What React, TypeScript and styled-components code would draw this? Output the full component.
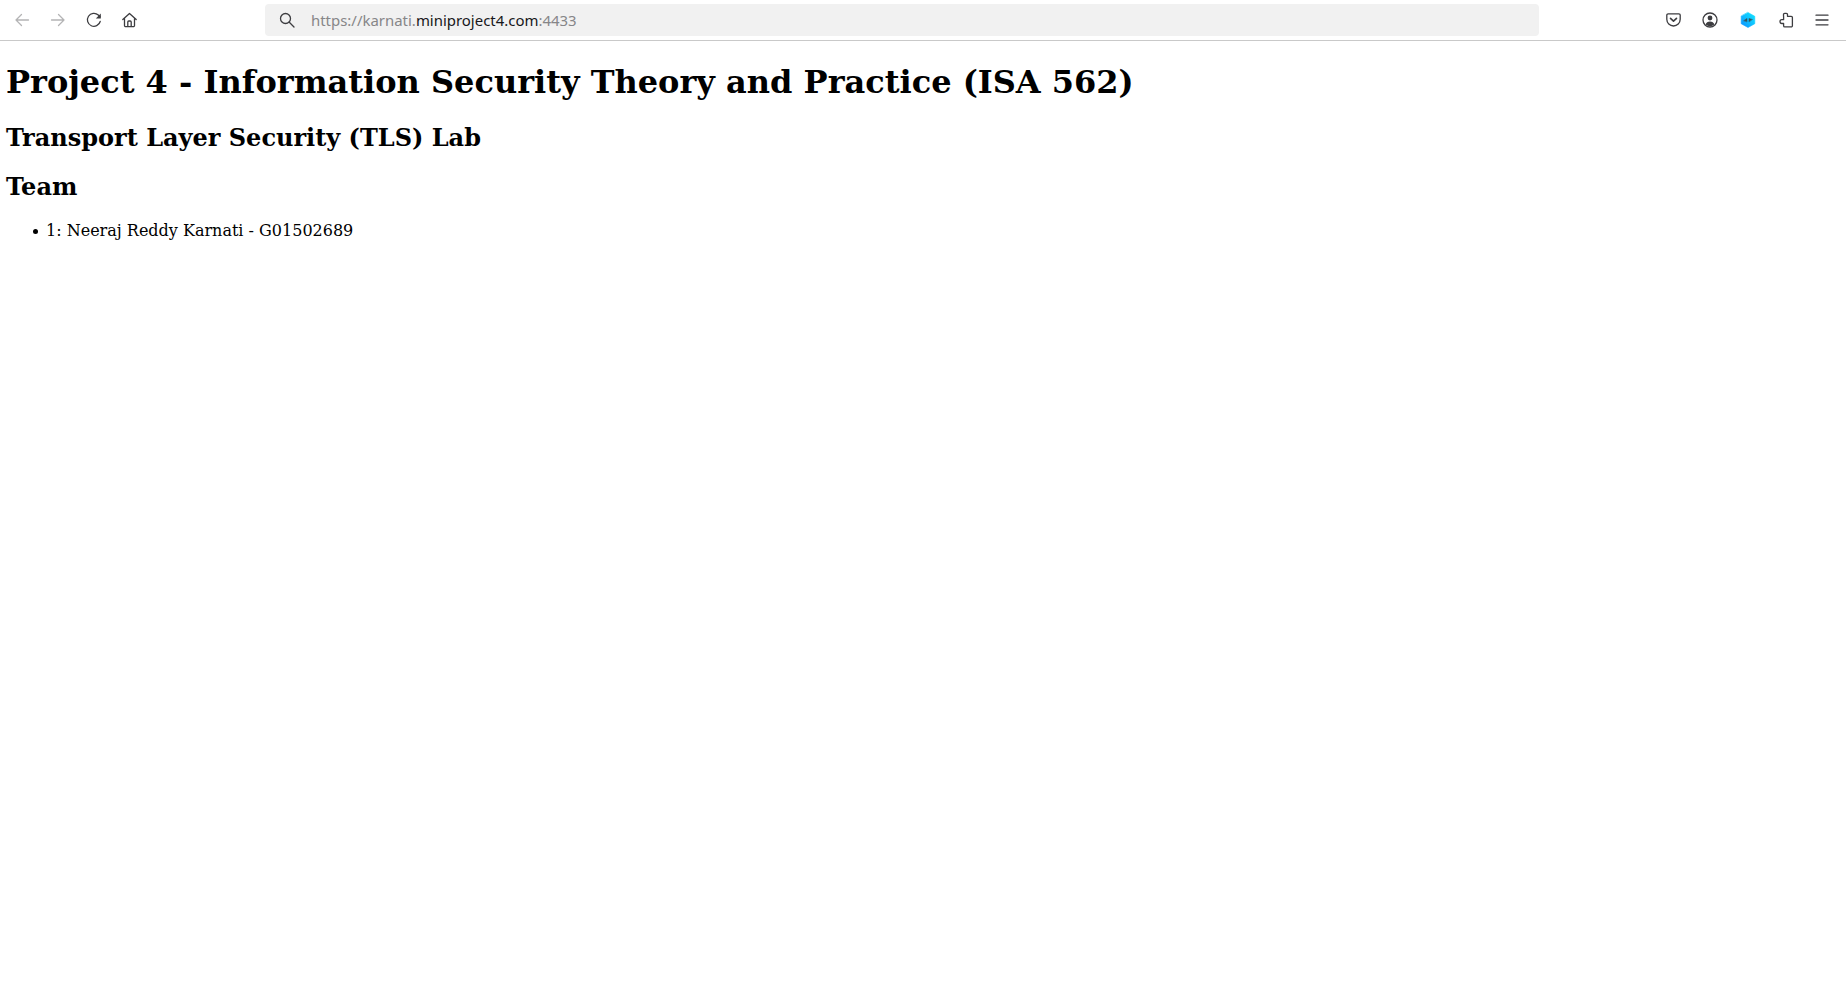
import React from "react";
import styled, { createGlobalStyle } from "styled-components";

const Global = createGlobalStyle`
  html, body { margin: 0; padding: 0; background: #fff; }
  body { font-family: "DejaVu Serif", serif; color: #000; }
`;

const Toolbar = styled.header`
  height: 40px;
  border-bottom: 1px solid #c9c9c9;
  display: flex;
  align-items: center;
  background: #fff;
  box-sizing: content-box;
`;
const NavGroup = styled.nav`
  display: flex;
  align-items: center;
  gap: 20px;
  padding-left: 14px;
  width: 265px;
  box-sizing: border-box;
  flex: none;
`;
const Icon = styled.svg<{ $dim?: boolean }>`
  width: 16px;
  height: 16px;
  flex: none;
  display: block;
  fill: none;
  overflow: visible;
  stroke: ${(p) => (p.$dim ? "#b4b4b5" : "#3d3d40")};
  stroke-width: 1.3;
  stroke-linecap: round;
  stroke-linejoin: round;
`;
const UrlBar = styled.div`
  width: 1274px;
  height: 32px;
  flex: none;
  background: #f1f1f1;
  border-radius: 4px;
  display: flex;
  align-items: center;
  padding-left: 14px;
  gap: 16px;
  box-sizing: border-box;
  margin-top: -1px;
`;
const UrlText = styled.span`
  font-family: "Noto Sans", sans-serif;
  font-size: 14.95px;
  color: #868688;
  white-space: nowrap;
`;
const Host = styled.span`
  color: #17171a;
`;
const ActionGroup = styled.div`
  flex: 1;
  display: flex;
  align-items: center;
  justify-content: flex-end;
  gap: 21.5px;
  padding-right: 16px;
`;
const Page = styled.main`
  padding: 0 6px;
`;
const Title = styled.h1`
  font-size: 32px;
  font-weight: 700;
  margin: 22px 0 0;
  line-height: 38px;
`;
const Subtitle = styled.h2`
  font-size: 24px;
  font-weight: 700;
  margin: 23px 0 0;
  line-height: 28px;
`;
const SectionTitle = styled.h2`
  font-size: 24px;
  font-weight: 700;
  margin: 21px 0 0;
  line-height: 28px;
`;
const TeamList = styled.ul`
  margin: 20px 0 0;
  padding-left: 40px;
  font-size: 16px;
  line-height: 19px;
  list-style: none;
`;
const TeamMember = styled.li`
  position: relative;
  &::before {
    content: "";
    position: absolute;
    left: -13px;
    top: 8px;
    width: 5px;
    height: 5px;
    border-radius: 50%;
    background: #000;
  }
`;

export default function App() {
  return (
    <>
      <Global />
      <Toolbar>
        <NavGroup>
          <Icon viewBox="0 0 16 16" $dim><path d="M14.5 8H2M7.5 2.5 2 8l5.5 5.5" /></Icon>
          <Icon viewBox="0 0 16 16" $dim><path d="M1.5 8H14M8.5 2.5 14 8l-5.5 5.5" /></Icon>
          <Icon viewBox="0 0 16 16"><path d="M14.2 9.5A6.5 6.5 0 1 1 12.3 3L14 4.7" /><path d="M14.8 1.5v5h-5z" fill="#3d3d40" stroke="none" /></Icon>
          <Icon viewBox="0.5 0 16 16"><path d="M1.3 7.6 8 1.4l6.7 6.2M3 6.5v7a1.2 1.2 0 0 0 1.2 1.2h7.6a1.2 1.2 0 0 0 1.2-1.2v-7M6.3 14.6V10a1 1 0 0 1 1-1h1.4a1 1 0 0 1 1 1v4.6" /></Icon>
        </NavGroup>
        <UrlBar>
          <Icon viewBox="0 0 16 16"><circle cx="6.5" cy="6.5" r="5" /><path d="m10.3 10.3 4.7 4.7" /></Icon>
          <UrlText>https://karnati.<Host>miniproject4.com</Host>:4433</UrlText>
        </UrlBar>
        <ActionGroup>
          <Icon viewBox="-1.5 0 16 16"><path d="M2.6 1.8h10.8a1.3 1.3 0 0 1 1.3 1.3v4.2a6.7 6.7 0 0 1-13.4 0V3.1a1.3 1.3 0 0 1 1.3-1.3z" /><path d="M5 6.3 8 9.2l3-2.9" strokeWidth="1.6" /></Icon>
          <Icon viewBox="0 0 16 16"><circle cx="8" cy="8" r="7" /><circle cx="8" cy="6" r="2.4" fill="#3d3d40" stroke="none" /><path d="M3.6 12.4c.6-2 2.2-3 4.4-3s3.8 1 4.4 3a6.4 6.4 0 0 1-8.8 0z" fill="#3d3d40" stroke="none" /></Icon>
          <Icon viewBox="-1 0 16 16">
            <defs>
              <linearGradient id="hexFill" x1="0" y1="1" x2="1" y2="0">
                <stop offset="0" stopColor="#0a8cff" />
                <stop offset="0.55" stopColor="#0fc4ff" />
                <stop offset="1" stopColor="#12e4ff" />
              </linearGradient>
            </defs>
            <path d="M8 0.5 14.8 4.3v7.4L8 15.5 1.2 11.7V4.3z" fill="url(#hexFill)" stroke="url(#hexFill)" strokeWidth="0.6" />
            <path d="M3.8 8.6 7 6.4v3.2zM12.2 7.4 9 6.4v3.2z" fill="#35545f" stroke="#35545f" strokeWidth="0.5" />
          </Icon>
          <Icon viewBox="-1.5 0 16 16"><path d="M6.2 1.4h1.6a1.2 1.2 0 0 1 1.2 1.2v1.7h3.7a1.2 1.2 0 0 1 1.2 1.2v8.2a1.2 1.2 0 0 1-1.2 1.2H6.3a1.2 1.2 0 0 1-1.2-1.2v-2.2H3.4a1.9 1.9 0 0 1 0-3.8h1.7V4.3H5V2.6a1.2 1.2 0 0 1 1.2-1.2z" /></Icon>
          <Icon viewBox="0 0 16 16"><path d="M2 3.2h12M2 8h12M2 12.8h12" /></Icon>
        </ActionGroup>
      </Toolbar>
      <Page>
        <Title>Project 4 - Information Security Theory and Practice (ISA 562)</Title>
        <Subtitle>Transport Layer Security (TLS) Lab</Subtitle>
        <SectionTitle>Team</SectionTitle>
        <TeamList><TeamMember>1: Neeraj Reddy Karnati - G01502689</TeamMember></TeamList>
      </Page>
    </>
  );
}
